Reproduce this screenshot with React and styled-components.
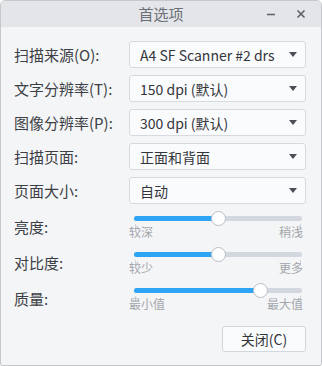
import styled, { createGlobalStyle } from 'styled-components'

const Global = createGlobalStyle`
  html, body { margin: 0; padding: 0; background: #ffffff; }
  body { font-family: "Noto Sans CJK SC", "Noto Sans", sans-serif; }
`

const Window = styled.div`
  width: 322px;
  height: 366px;
  box-sizing: border-box;
  border: 1px solid #c6c8cc;
  border-radius: 5px 5px 2px 2px;
  background: #f4f5f7;
  overflow: hidden;
  display: flex;
  flex-direction: column;
`

const TitleBar = styled.div`
  height: 26px;
  background: #e4e5e8;
  display: grid;
  grid-template-columns: 1fr auto 1fr;
  align-items: center;
  flex-shrink: 0;
`

const Title = styled.div`
  grid-column: 2;
  font-size: 15px;
  color: #6a6f78;
  line-height: 26px;
`

const TitleButtons = styled.div`
  grid-column: 3;
  justify-self: end;
  display: flex;
  gap: 18px;
  padding-right: 14px;
  align-items: center;
`

const TitleBtn = styled.span`
  display: flex;
  width: 12px;
  height: 12px;
  align-items: center;
  justify-content: center;
`

const Body = styled.div`
  flex: 1;
  padding: 14px 15px 0 13px;
  display: grid;
  grid-template-columns: 115px 177px;
  grid-auto-rows: auto;
  row-gap: 7px;
  align-content: start;
`

const Label = styled.div`
  font-size: 15px;
  color: #3c3f45;
  height: 27px;
  line-height: 27px;
  white-space: nowrap;
  margin-top: ${p => p.$offset || 0}px;
`

const Combo = styled.div`
  height: 27px;
  box-sizing: border-box;
  border: 1px solid #d6d9df;
  border-radius: 3px;
  background: #fafbfc;
  display: flex;
  align-items: center;
  justify-content: space-between;
  padding: 0 8px 0 10px;
  font-size: 14px;
  color: #33363b;
  white-space: nowrap;
`

const Arrow = styled.span`
  width: 0;
  height: 0;
  border-left: 4.5px solid transparent;
  border-right: 4.5px solid transparent;
  border-top: 5px solid #4a4e55;
  flex-shrink: 0;
  margin-left: 4px;
`

const SliderBox = styled.div`
  display: flex;
  flex-direction: column;
  height: 29px;
`

const TrackArea = styled.div`
  position: relative;
  height: 16px;
  margin: 0 4px 0 5px;
`

const Track = styled.div`
  position: absolute;
  left: 0;
  right: 0;
  top: 5px;
  height: 5px;
  border-radius: 3px;
  background: #d3d7e0;
`

const Fill = styled.div`
  position: absolute;
  left: 0;
  top: 5px;
  height: 5px;
  border-radius: 3px;
  background: #2ea5f4;
`

const Thumb = styled.div`
  position: absolute;
  top: 0;
  width: 15px;
  height: 15px;
  box-sizing: border-box;
  margin-left: -7.5px;
  border-radius: 50%;
  background: #ffffff;
  border: 1px solid #b8bdc7;
`

const Ticks = styled.div`
  display: flex;
  justify-content: space-between;
  margin: -3px 5px 0 6px;
  height: 6px;
`

const Tick = styled.span`
  width: 1px;
  height: 6px;
  background: #cfd2d8;
`

const TickLabels = styled.div`
  display: flex;
  justify-content: space-between;
  font-size: 12px;
  line-height: 12px;
  color: #a3a6ab;
  margin: -4px 3px 0 0;
`

const Footer = styled.div`
  grid-column: 1 / span 2;
  display: flex;
  justify-content: flex-end;
  margin-top: 7px;
`

const Button = styled.button`
  width: 84px;
  height: 26px;
  box-sizing: border-box;
  border: 1px solid #d2d6dd;
  border-radius: 3px;
  background: #fafbfc;
  font-family: inherit;
  font-size: 14px;
  color: #33363b;
  padding: 0;
`

const combos = [
  ['扫描来源(O):', 'A4 SF Scanner #2 drs'],
  ['文字分辨率(T):', '150 dpi (默认)'],
  ['图像分辨率(P):', '300 dpi (默认)'],
  ['扫描页面:', '正面和背面'],
  ['页面大小:', '自动'],
]

const sliders = [
  ['亮度:', 0.5, '较深', '稍浅'],
  ['对比度:', 0.5, '较少', '更多'],
  ['质量:', 0.75, '最小值', '最大值'],
]

const Slider = ({ value, min, max }) => (
  <SliderBox>
    <TrackArea>
      <Track />
      <Fill style={{ width: `${value * 100}%` }} />
      <Thumb style={{ left: `${value * 100}%` }} />
    </TrackArea>
    <Ticks><Tick /><Tick /></Ticks>
    <TickLabels><span>{min}</span><span>{max}</span></TickLabels>
  </SliderBox>
)

export default function App() {
  return (
    <>
      <Global />
      <Window>
        <TitleBar>
          <Title>首选项</Title>
          <TitleButtons>
            <TitleBtn>
              <svg width="10" height="10" viewBox="0 0 10 10">
                <path d="M1 5.5h8" stroke="#5b6069" strokeWidth="1.6" />
              </svg>
            </TitleBtn>
            <TitleBtn>
              <svg width="10" height="10" viewBox="0 0 10 10">
                <path d="M1.5 1.5l7 7M8.5 1.5l-7 7" stroke="#5b6069" strokeWidth="1.6" />
              </svg>
            </TitleBtn>
          </TitleButtons>
        </TitleBar>
        <Body>
          {combos.map(([label, val]) => (
            <>
              <Label key={label}>{label}</Label>
              <Combo key={label + 'c'}>
                <span>{val}</span>
                <Arrow />
              </Combo>
            </>
          ))}
          {sliders.map(([label, v, min, max]) => (
            <>
              <Label key={label} $offset={2}>{label}</Label>
              <Slider key={label + 's'} value={v} min={min} max={max} />
            </>
          ))}
          <Footer>
            <Button>关闭(C)</Button>
          </Footer>
        </Body>
      </Window>
    </>
  )
}
